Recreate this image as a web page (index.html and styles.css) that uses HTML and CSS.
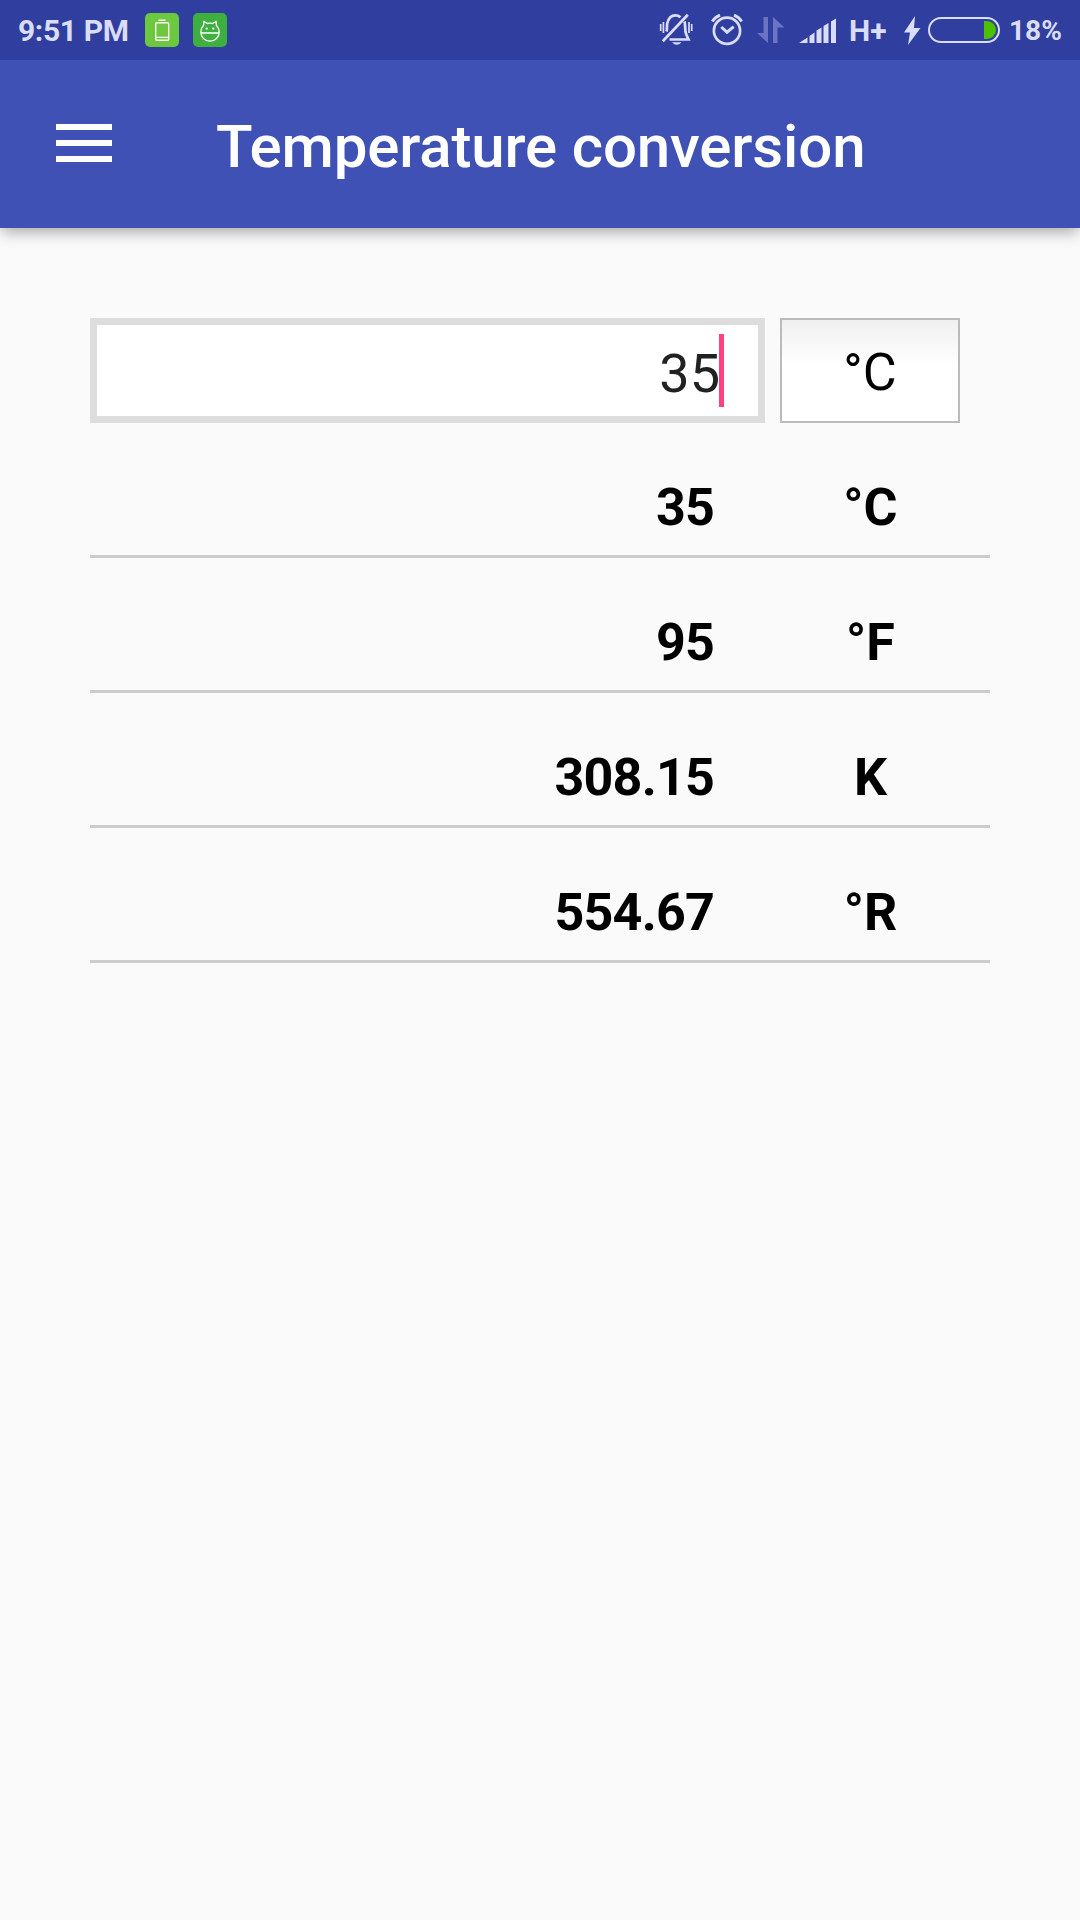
FILE: index.html
```html
<!DOCTYPE html>
<html lang="en">
<head>
<meta charset="utf-8">
<title>Temperature conversion</title>
<link rel="stylesheet" href="styles.css">
</head>
<body>
<div class="status">
  <div class="status-left">
    <span class="clock">9:51 PM</span>
    <svg class="app-icon" width="34" height="34" viewBox="0 0 34 34"><rect width="34" height="34" rx="5" fill="#6cc83c"/><g fill="none" stroke="#fff" stroke-width="1.4"><rect x="10.7" y="9.7" width="13" height="17.6" rx="1"/><path d="M13.5 7.2h7M11 24.4h12.500"/></g></svg>
    <svg class="app-icon" width="34" height="34" viewBox="0 0 34 34"><rect width="34" height="34" rx="5" fill="#3fb03f"/><g fill="none" stroke="#fff" stroke-width="1.300"><path d="M10.500 13L11 8.500l3.500 2q2.500-.7 5 0L23 8.500l.5 4.500"/><path d="M10.500 12.500a9.200 9.200 0 1 0 13 0M7.800 20h18.400"/></g><circle cx="13.700" cy="15.600" r="1.100" fill="#fff"/><circle cx="20.300" cy="15.600" r="1.100" fill="#fff"/></svg>
  </div>
  <div class="status-right">
    <svg class="bell" width="36" height="34" viewBox="0 0 36 34"><g fill="none" stroke="currentColor"><path stroke-width="1.700" d="M2.700 12v7M5.400 10v11M31 10v11M33.700 12v7"/><path stroke-width="2.700" d="M8.500 19.500C9.300 17 8.700 14.500 9.200 11.500 10.500 6 13 3.400 17.300 3.400c2 0 3.800.6 5.200 1.800M26.500 9.500C27.800 13 26.300 18 28.300 22.500l2.200 5H11.500M4.800 29.300L29.800 2.800"/></g><path d="M14 30.300h9.500q-4.700 5-9.500 0z" fill="currentColor"/></svg>
    <svg class="alarm" width="34" height="34" viewBox="0 0 34 34"><g fill="none" stroke="currentColor"><circle cx="17" cy="18.700" r="13.100" stroke-width="2.700"/><path stroke-width="3" d="M11.300 15l5.700 5.200 6.700-5.500M2.300 9.500Q5 5.200 10 3.200M31.700 9.500Q29 5.200 24 3.200"/></g></svg>
    <svg class="data" width="30" height="28" viewBox="0 0 30 28"><path d="M7.500 1H12v26L1 17h6.500zM17 27V1l11.500 10.500H21.500V27z" fill="currentColor"/></svg>
    <svg class="signal" width="38" height="26" viewBox="0 0 38 26"><path d="M0 25L8.500 19.500V25zM10.500 25v-7l5-3.500V25zM17.500 25V12.500l5-3V25zM24.500 25V8l5-3V25zM32 25V3.500L37 .5V25z" fill="currentColor"/></svg>
    <span class="network">H+</span>
    <svg class="bolt" width="18" height="30" viewBox="0 0 18 30"><path d="M11 0L0 16.500h6L4 29 16.500 12H10z" fill="currentColor"/></svg>
    <svg class="battery" width="72" height="26" viewBox="0 0 72 26"><rect x="1" y="1" width="70" height="24" rx="12" fill="none" stroke="currentColor" stroke-width="2"/><path d="M56 4h3a9 9 0 0 1 0 18h-3z" fill="#4bc100"/></svg>
    <span class="percent">18%</span>
  </div>
</div>
<header class="toolbar">
  <svg class="menu" width="56" height="38" viewBox="0 0 56 38"><path d="M0 0h56v6H0zM0 16h56v6H0zM0 32h56v6H0z" fill="#fff"/></svg>
  <h1 class="title">Temperature conversion</h1>
</header>
<main class="content">
  <div class="entry">
    <div class="field"><span class="typed">35</span><span class="caret"></span></div>
    <div class="unit-button">°C</div>
  </div>
  <div class="row"><span class="value">35</span><span class="unit">°C</span></div>
  <div class="row"><span class="value">95</span><span class="unit">°F</span></div>
  <div class="row"><span class="value">308.15</span><span class="unit">K</span></div>
  <div class="row"><span class="value">554.67</span><span class="unit">°R</span></div>
</main>
</body>
</html>
```
FILE: styles.css
```css
* { box-sizing: border-box; }
body {
  margin: 0;
  min-height: 1920px;
  background: #fafafa;
  color: #000;
  font-family: Roboto, sans-serif;
  overflow: hidden;
}
svg { display: block; flex: none; }
.status {
  position: relative;
  z-index: 1;
  display: flex;
  justify-content: space-between;
  height: 60px;
  background: #303f9f;
  color: #d9ddf8;
  font-size: 30px;
  font-weight: 700;
  line-height: 62px;
}
.status-left, .status-right { display: flex; }
.status-left { padding-left: 18px; }
.clock { width: 127px; letter-spacing: -.35px; }
.app-icon { margin: 13px 14px 0 0; }
.status-right { padding-right: 18px; }
.bell { margin: 12px 16px 0 0; }
.alarm { margin: 12px 12px 0 0; }
.data { margin: 16px 13px 0 0; color: #6974c3; }
.signal { margin: 18px 12px 0 0; }
.network { width: 55px; }
.bolt { margin: 16px 6px 0 0; }
.battery { margin: 17px 9px 0 0; }
.percent { width: 53px; font-size: 28px; }
.toolbar {
  display: flex;
  height: 168px;
  padding-left: 56px;
  background: #3f51b5;
  box-shadow: 0 6px 14px -2px rgba(0, 0, 0, .34);
}
.menu { margin-top: 64px; }
.title {
  margin: 51px 0 0 104px;
  color: #fff;
  font-size: 60px;
  font-weight: 500;
  letter-spacing: -.15px;
  line-height: 72px;
}
.content { padding: 90px 90px 0; }
.entry { display: flex; gap: 15px; height: 105px; }
.field {
  display: flex;
  justify-content: flex-end;
  width: 675px;
  padding: 9px 34px 0 0;
  border: 7px solid #ddd;
  background: #fff;
}
.typed { margin-right: -1px; color: #212121; font-size: 54px; line-height: 80px; }
.caret { width: 5px; height: 73px; background: #ff4081; }
.unit-button {
  width: 180px;
  border: 2px solid #bbb;
  background: linear-gradient(#f0f0f0, #fff 45%);
  font-size: 52px;
  line-height: 105px;
  text-align: center;
}
.row {
  display: grid;
  grid-template-columns: 660px 240px;
  height: 135px;
  border-bottom: 3px solid #ccc;
  font-size: 52px;
  font-weight: 700;
  line-height: 170px;
}
.value { padding-right: 36px; letter-spacing: -.8px; text-align: right; }
.unit { padding-left: 1px; text-align: center; }
```
